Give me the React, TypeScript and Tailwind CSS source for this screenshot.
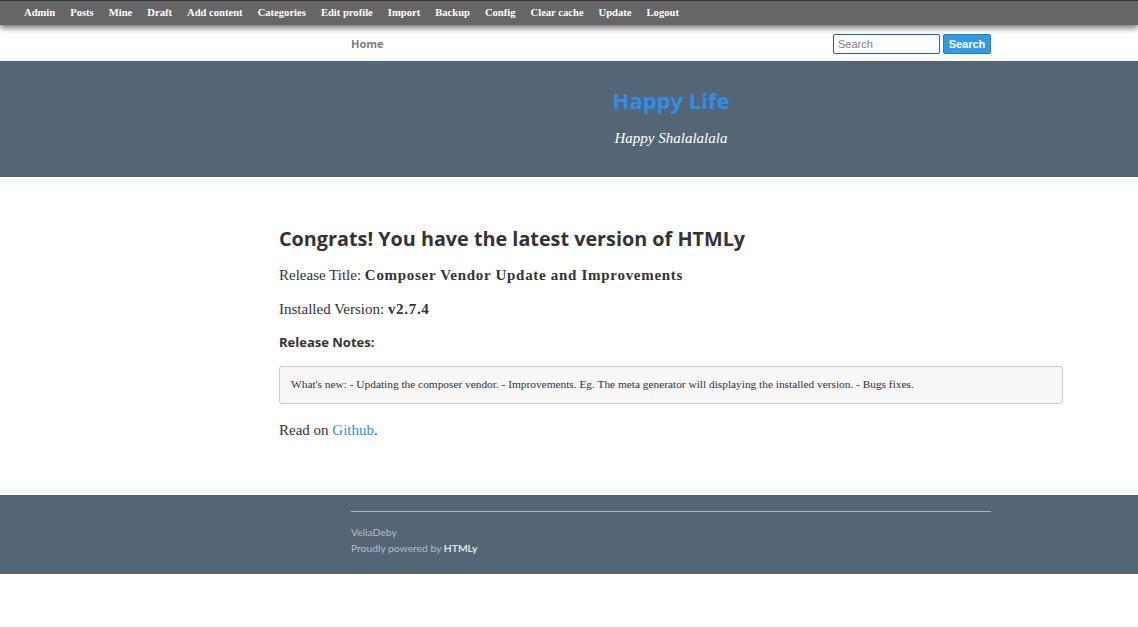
import React from "react";

const adminLinks = [
  "Admin",
  "Posts",
  "Mine",
  "Draft",
  "Add content",
  "Categories",
  "Edit profile",
  "Import",
  "Backup",
  "Config",
  "Clear cache",
  "Update",
  "Logout",
];

const serif = "font-['Liberation_Serif','Times_New_Roman',serif]";

const AdminBar = () => {
  return (
    <div className="relative h-[25px] bg-[#666666] border-t border-[#333333] shadow-[0_3px_6px_rgba(0,0,0,0.55)] z-10">
      <ul className={`flex h-full items-center gap-[15px] pl-[24px] pb-[1px] text-[10.6px] font-bold text-white ${serif}`}>
        {adminLinks.map((link) => (
          <li key={link}>{link}</li>
        ))}
      </ul>
    </div>
  );
};

const NavBar = () => {
  return (
    <div className="h-[36px] bg-white flex items-center">
      <div className="ml-[351px] w-[640px] flex items-center justify-between pt-[2px]">
        <span className="font-['Open_Sans',sans-serif] text-[11px] font-bold text-[#777e86]">
          Home
        </span>
        <div className="flex items-center gap-[3px]">
          <div className="w-[107px] h-[20px] border border-[#1f6d8e] rounded-[2px] px-[4px] flex items-center font-['Liberation_Sans',sans-serif] text-[11px] text-[#808080]">
            Search
          </div>
          <div className="w-[48px] h-[20px] bg-[#2f9be3] border border-[#2a7fb8] rounded-[2px] flex items-center justify-center font-['Liberation_Sans',sans-serif] text-[11px] font-bold text-white">
            Search
          </div>
        </div>
      </div>
    </div>
  );
};

const Header = () => {
  return (
    <div className="h-[116px] bg-[#546675] flex flex-col items-center pl-[204px]">
      <h1 className="mt-[24px] font-['Open_Sans',sans-serif] text-[22px] font-bold text-[#2e8fe8] leading-[30px]">
        Happy Life
      </h1>
      <p className={`mt-[13px] ${serif} italic text-[15px] text-white leading-[20px]`}>
        Happy Shalalalala
      </p>
    </div>
  );
};

const Content = () => {
  return (
    <div className="ml-[279px] w-[784px] pt-[49px] pb-[55px] text-[#333333]">
      <h2 className="font-['Open_Sans',sans-serif] text-[19.8px] font-bold leading-[26px]">
        Congrats! You have the latest version of HTMLy
      </h2>
      <p className={`mt-[13px] ${serif} text-[15px] leading-[20px]`}>
        Release Title:{" "}
        <strong className="tracking-[0.7px]">Composer Vendor Update and Improvements</strong>
      </p>
      <p className={`mt-[14px] ${serif} text-[15px] leading-[20px]`}>
        Installed Version: <strong className="tracking-[0.7px]">v2.7.4</strong>
      </p>
      <h3 className="mt-[13px] font-['Open_Sans',sans-serif] text-[13px] font-bold leading-[20px]">
        Release Notes:
      </h3>
      <div className={`mt-[14px] h-[38px] bg-[#f7f7f7] border border-[#cccccc] rounded-[3px] px-[11px] flex items-center ${serif} text-[11.35px]`}>
        What's new: - Updating the composer vendor. - Improvements. Eg. The meta generator will displaying the installed version. - Bugs fixes.
      </div>
      <p className={`mt-[16px] ${serif} text-[15px] leading-[20px]`}>
        Read on <a className="text-[#2e8fe8]">Github</a>.
      </p>
    </div>
  );
};

const Footer = () => {
  return (
    <div className="h-[79px] bg-[#546675]">
      <div className="ml-[351px] w-[640px] pt-[16px]">
        <div className="border-t border-[#a9b4bf]" />
        <div className="mt-[12px] font-['Lato',sans-serif] text-[10.3px] text-[#b3bdc7] leading-[16px]">
          <div>VeliaDeby</div>
          <div>
            Proudly powered by <strong className="text-[#dde3e8]">HTMLy</strong>
          </div>
        </div>
      </div>
    </div>
  );
};

const App = () => {
  return (
    <div className="min-h-[628px] bg-white border-b border-[#d4d4d4] flex flex-col">
      <AdminBar />
      <NavBar />
      <Header />
      <Content />
      <Footer />
      <div className="flex-1" />
    </div>
  );
};

export default App;
